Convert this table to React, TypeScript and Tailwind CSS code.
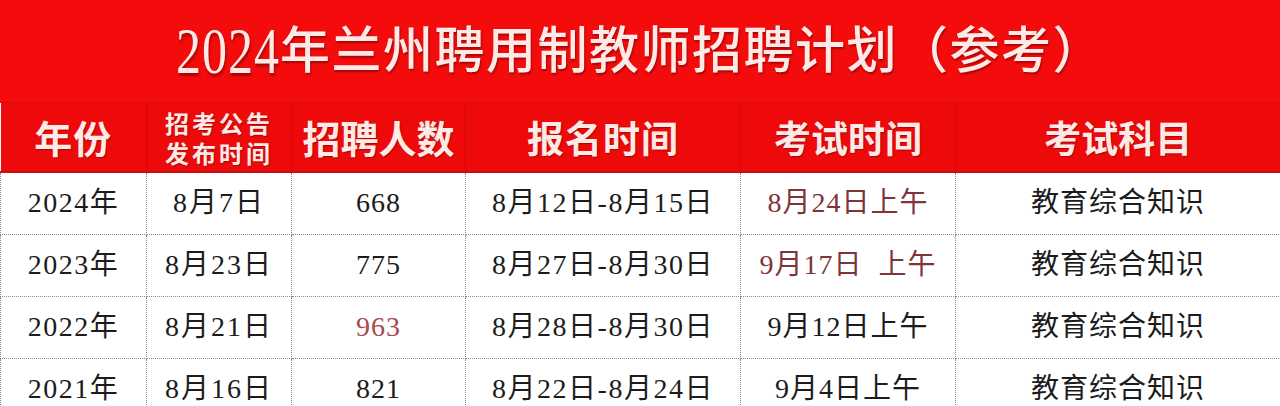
const rows = [
  { year: "2024", notice: "8月7日", count: "668", signup: "8月12日-8月15日", exam: "8月24日上午", examRed: true, countRed: false },
  { year: "2023", notice: "8月23日", count: "775", signup: "8月27日-8月30日", exam: "9月17日\u00a0 上午", examRed: true, countRed: false },
  { year: "2022", notice: "8月21日", count: "963", signup: "8月28日-8月30日", exam: "9月12日上午", examRed: false, countRed: true },
  { year: "2021", notice: "8月16日", count: "821", signup: "8月22日-8月24日", exam: "9月4日上午", examRed: false, countRed: false },
];

const bodyFont = "[font-family:'Liberation_Serif','Noto_Sans_CJK_SC',serif]";

export default function App() {
  return (
    <div className="w-[1280px] h-[406px] overflow-hidden bg-white">
      {/* 标题 */}
      <div className="h-[103px] bg-[#f40c0c] border-b border-[#d80a0a] flex items-center justify-center">
        <h1 className="text-[50px] leading-none tracking-[1.5px] text-[#fde9e6] font-medium [font-family:'Liberation_Serif','Noto_Sans_CJK_SC',serif] [text-shadow:1px_2px_2px_rgba(110,0,0,0.55)]">
          <span className="inline-block scale-y-[1.3] tracking-[1px]">2024</span>年兰州聘用制教师招聘计划（参考）
        </h1>
      </div>

      <table className="w-[1280px] table-fixed border-collapse">
        <colgroup>
          <col className="w-[146px]" />
          <col className="w-[145px]" />
          <col className="w-[174px]" />
          <col className="w-[275px]" />
          <col className="w-[215px]" />
          <col className="w-[325px]" />
        </colgroup>
        <thead>
          <tr className="h-[69px] bg-[#ee0a0a] text-[#fde9e6] [font-family:'Noto_Sans_CJK_SC',sans-serif] font-bold [text-shadow:1px_1px_1px_rgba(110,0,0,0.5)] border-b-2 border-[#c4121a]">
            <th className="text-[38px] leading-none tracking-[1px] border-r border-[#d20808] font-bold">年份</th>
            <th className="border-r border-[#d20808] font-bold pt-[2px]">
              <div className="flex flex-col items-center text-[24px] leading-[30px] tracking-[3px]">
                <span>招考公告</span>
                <span>发布时间</span>
              </div>
            </th>
            <th className="text-[38px] leading-none border-r border-[#d20808] font-bold">招聘人数</th>
            <th className="text-[37px] leading-none tracking-[1px] border-r border-[#d20808] font-bold">报名时间</th>
            <th className="text-[37px] leading-none border-r border-[#d20808] font-bold">考试时间</th>
            <th className="text-[37px] leading-none font-bold">考试科目</th>
          </tr>
        </thead>
        <tbody className={`${bodyFont} text-[28px] leading-none text-[#1c1c1c]`}>
          {rows.map((r) => (
            <tr key={r.year} className="h-[62px]">
              <td className="text-center tracking-[1.5px] border border-dotted border-[#8a8a8a]">{r.year}年</td>
              <td className="text-center tracking-[2px] border border-dotted border-[#8a8a8a]">{r.notice}</td>
              <td
                className={`text-center tracking-[1px] border border-dotted border-[#8a8a8a] ${
                  r.countRed ? "text-[#a8474d]" : ""
                }`}
              >
                {r.count}
              </td>
              <td className="text-center tracking-[1.5px] border border-dotted border-[#8a8a8a]">{r.signup}</td>
              <td
                className={`text-center tracking-[1px] border border-dotted border-[#8a8a8a] ${
                  r.examRed ? "text-[#7e3438]" : ""
                }`}
              >
                {r.exam}
              </td>
              <td className="text-center tracking-[1px] border border-dotted border-[#8a8a8a]">教育综合知识</td>
            </tr>
          ))}
        </tbody>
      </table>
    </div>
  );
}
